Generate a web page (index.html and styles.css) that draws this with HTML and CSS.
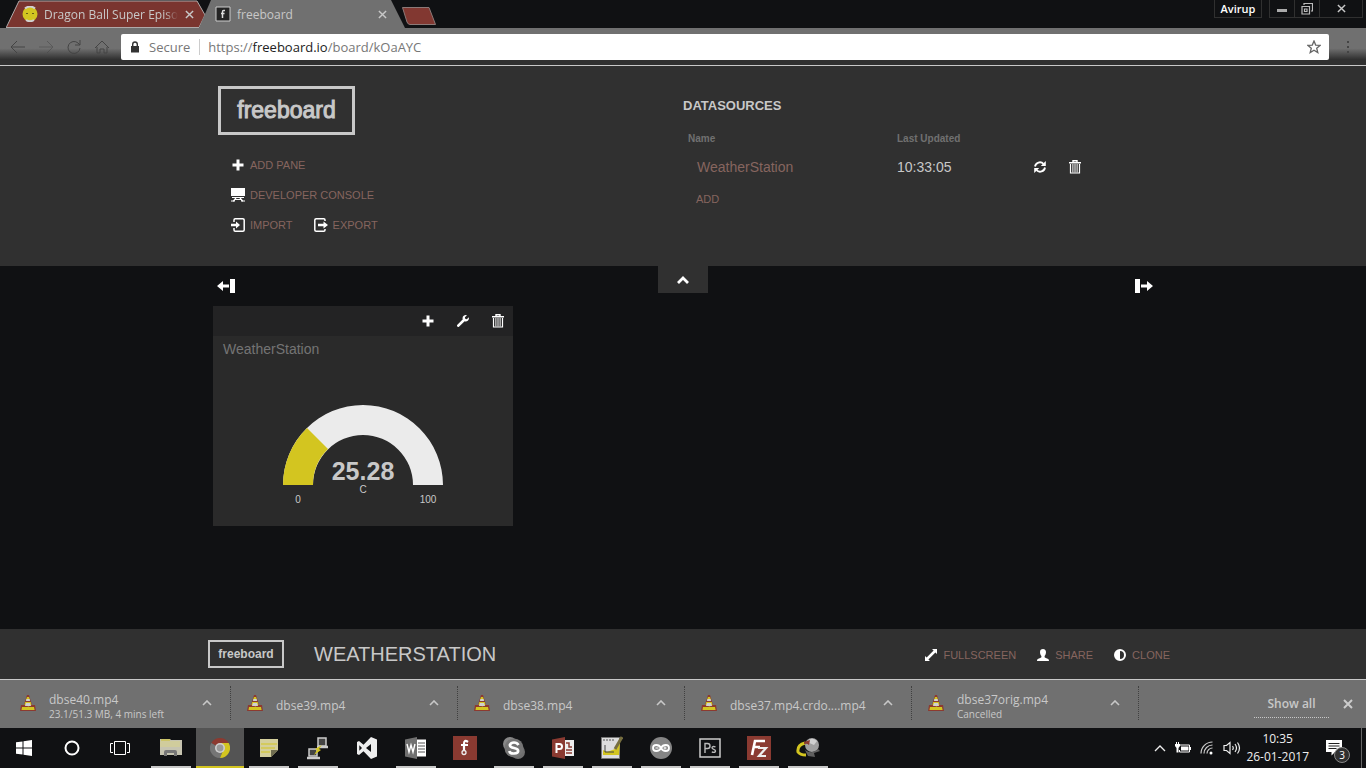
FILE: index.html
```
<!DOCTYPE html>
<html lang="en">
<head>
<meta charset="utf-8">
<title>freeboard</title>
<link rel="stylesheet" href="styles.css">
</head>
<body>
<svg width="0" height="0" class="defs" aria-hidden="true">
  <symbol id="trash" viewBox="0 0 12 14"><path d="M4 2V.7h4V2M0 2.7h12" fill="none" stroke="#fff" stroke-width="1.4"/><path d="M1.5 4v9h9V4" fill="none" stroke="#fff" stroke-width="1.2"/><path d="M3.9 4v8.500M6 4v8.500M8.100 4v8.500" stroke="#fff" stroke-width="1"/></symbol>
  <symbol id="plus" viewBox="0 0 12 12"><path d="M4.500 .5h3v4h4v3h-4v4h-3v-4h-4v-3h4z" fill="#fff"/></symbol>
  <symbol id="cone" viewBox="0 0 16 18"><path d="M7 1h2l3 10h3l1 6H0l1-6h3z" fill="#8c3a30"/><path d="M7 3h2l1 3H6zM5.200 8h5.600l.7 3-3 1.500L4.500 11zM2 13h12l.6 3H1.500z" fill="#d3c520"/><path d="M6.500 5h3l.6 2H5.900zM6 9h4l1 3H5z" fill="#d0d0d0"/></symbol>
  <symbol id="up" viewBox="0 0 10 6"><path d="M1 5l4-4 4 4" fill="none" stroke="#c8c8c8" stroke-width="1.600"/></symbol>
  <symbol id="close" viewBox="0 0 10 10"><path d="M1 1l8 8M9 1l-8 8" fill="none" stroke="currentColor" stroke-width="1.600"/></symbol>
</svg>

<div class="tabstrip">
  <div class="tab tab-red">
    <svg class="tab-shape" viewBox="0 0 200 28" preserveAspectRatio="none"><path d="M0 28L13 1H191L199 15L193 28z" fill="#7a352f"/><path d="M0 28L13 1H191L199 15L193 27.500H0" fill="none" stroke="#b0aaaa"/></svg>
    <svg class="fav" width="16" height="16" viewBox="0 0 16 16"><circle cx="8" cy="8" r="7.500" fill="#d3c520"/><path d="M3 2.500a7.500 7.500 0 0 1 10 0M4 14a7.500 7.500 0 0 0 8 0" stroke="#d0d0d0" stroke-width="2" fill="none"/><path d="M4 7.500h2M10 7.500h2" stroke="#665d16"/></svg>
    <span class="tab-title fade">Dragon Ball Super Episo</span>
    <button class="tab-close" aria-label="Close tab"><svg width="9" height="9"><use href="#close"/></svg></button>
  </div>
  <div class="tab tab-active">
    <svg class="tab-shape" viewBox="0 0 207 28" preserveAspectRatio="none"><path d="M0 28L12 0H192L206 28z" fill="#707070"/></svg>
    <svg class="fav" width="16" height="16" viewBox="0 0 16 16"><path d="M1 1h14v14H1z" fill="#242424" stroke="#ccc" stroke-width="1"/><path d="M10 4.500H8.500Q7.500 4.500 7.500 6v6M6 7.500h3.500" stroke="#ddd" stroke-width="1.500" fill="none"/></svg>
    <span class="tab-title">freeboard</span>
    <button class="tab-close" aria-label="Close tab"><svg width="9" height="9"><use href="#close"/></svg></button>
  </div>
  <button class="newtab" aria-label="New tab"><svg width="36" height="19" viewBox="0 0 36 19"><path d="M1.500 .5H28L34.500 17.500H9Q7 17.500 6 15z" fill="#823831" stroke="#8c7a78"/></svg></button>
  <div class="winctl">
    <button class="user">Avirup</button>
    <div class="wingroup">
      <button aria-label="Minimize"><svg width="10" height="10"><path d="M0 5h10v3H0z" fill="#aaa"/></svg></button>
      <button aria-label="Restore"><svg width="12" height="12" viewBox="0 0 12 12"><path d="M3 2V.5h8.500V8H10M1 3.500h7.500v7.500H1zM3.500 6h2.500v2.500H3.500z" fill="none" stroke="#bbb" stroke-width="1.200"/></svg></button>
      <button class="x" aria-label="Close"><svg width="9" height="9"><use href="#close"/></svg></button>
    </div>
  </div>
</div>

<div class="toolbar">
  <div class="nav">
    <button aria-label="Back"><svg width="16" height="14" viewBox="0 0 16 14"><path d="M7 1L1 7l6 6M1 7h14"/></svg></button>
    <button aria-label="Forward" class="dim"><svg width="16" height="14" viewBox="0 0 16 14"><path d="M9 1l6 6-6 6M15 7H1"/></svg></button>
    <button aria-label="Reload"><svg width="16" height="14" viewBox="0 0 16 14"><path d="M14 8a6 6 0 1 1-2-5l2 2M14 0v5H9"/></svg></button>
    <button aria-label="Home"><svg width="16" height="14" viewBox="0 0 16 14"><path d="M1 8l7-7 7 7M3 7v6h3V9h4v4h3V7"/></svg></button>
  </div>
  <div class="omnibox">
    <svg width="10" height="12" viewBox="0 0 10 12"><path d="M1 5h8v6.500H1z" fill="#333"/><path d="M2.700 5V3.300a2.300 2.300 0 0 1 4.600 0V5" fill="none" stroke="#333" stroke-width="1.400"/></svg>
    <span class="secure">Secure</span>
    <span class="url">https://<b>freeboard.io</b>/board/kOaAYC</span>
    <button class="star" aria-label="Bookmark"><svg width="14" height="14" viewBox="0 0 14 14"><path d="M7 1l1.700 4.100 4.300.3-3.300 2.800 1.100 4.300L7 10.200 3.200 12.500l1.100-4.300L1 5.400l4.300-.3z" fill="none" stroke="#666" stroke-width="1.300"/></svg></button>
  </div>
  <button class="dots" aria-label="Menu"><svg width="4" height="14" viewBox="0 0 4 14"><path d="M1 1h2v2H1zM1 6h2v2H1zM1 11h2v2H1z" fill="#444"/></svg></button>
</div>

<header class="admin">
  <div class="wrap admin-grid">
    <div class="admin-left">
      <h1 class="logo">freeboard</h1>
      <ul class="menu">
        <li><a href="#"><svg width="14" height="12"><use href="#plus"/></svg>ADD PANE</a></li>
        <li><a href="#"><svg width="14" height="14" viewBox="0 0 14 14"><path d="M0 0h14v8H0z" fill="#fff"/><path d="M1 9.500h12M5 10L2 13.500M9 10l3 3.500M4 11.500h6M0 13h4M10 13h4" stroke="#fff" stroke-width="1.200"/></svg>DEVELOPER CONSOLE</a></li>
        <li><a href="#"><svg width="14" height="14" viewBox="0 0 14 14"><path d="M3 4V2q0-1.200 1.200-1.200h7.600Q13.200.8 13.200 2v10q0 1.200-1.400 1.200H4.200Q3 13.200 3 12v-2" fill="none" stroke="#fff" stroke-width="1.500"/><path d="M0 5.800h5V3.500L9 7l-4 3.500V8.200H0z" fill="#fff"/></svg>IMPORT</a><a href="#"><svg width="14" height="14" viewBox="0 0 14 14"><path d="M11 3V2Q11 .8 9.800.8H2.200Q.8.800.8 2v10q0 1.200 1.400 1.200h7.600Q11 13.200 11 12v-1" fill="none" stroke="#fff" stroke-width="1.500"/><path d="M4 5.800h5.500V3.500L14 7l-4.500 3.500V8.200H4z" fill="#fff"/></svg>EXPORT</a></li>
      </ul>
    </div>
    <section class="sources">
      <h2>DATASOURCES</h2>
      <table>
        <thead><tr><th>Name</th><th>Last Updated</th><th></th></tr></thead>
        <tbody><tr><td><a href="#">WeatherStation</a></td><td>10:33:05</td><td class="acts">
          <button aria-label="Refresh"><svg width="12" height="12" viewBox="0 0 12 12"><path d="M1 5.500a5 5 0 0 1 8.500-2.700M11 6.500a5 5 0 0 1-8.500 2.700" fill="none" stroke="#fff" stroke-width="1.800"/><path d="M11.800 0v5H6.800zM.2 12V7h5z" fill="#fff"/></svg></button>
          <button aria-label="Delete datasource"><svg width="12" height="14"><use href="#trash"/></svg></button>
        </td></tr></tbody>
      </table>
      <a class="add" href="#">ADD</a>
    </section>
  </div>
</header>

<main class="board">
  <div class="wrap">
    <div class="colbar">
      <button aria-label="Add column left"><svg width="18" height="14" viewBox="0 0 18 14"><path d="M0 7l6-5v3.500h6v3H6V12zM13 0h5v14h-5z" fill="#fff"/></svg></button>
      <button class="toggle" aria-label="Collapse header"><svg width="12" height="8" viewBox="0 0 12 8"><path d="M1 7l5-5 5 5" fill="none" stroke="#fff" stroke-width="2.800"/></svg></button>
      <button class="right" aria-label="Add column right"><svg width="18" height="14" viewBox="0 0 18 14"><path d="M18 7l-6-5v3.500H6v3h6V12zM5 0H0v14h5z" fill="#fff"/></svg></button>
    </div>
    <article class="pane">
      <div class="pane-tools">
        <button aria-label="Add widget"><svg width="12" height="12"><use href="#plus"/></svg></button>
        <button aria-label="Edit pane"><svg width="12" height="12" viewBox="0 0 12 12"><path d="M1.300 10.700L7 5" stroke="#fff" stroke-width="2.600" stroke-linecap="round"/><path d="M10 .3A3.300 3.300 0 0 0 5.600 4l2.300 2.400A3.300 3.300 0 0 0 11.800 2.300L9.800 4.200 8.200 3.700 7.900 2.200z" fill="#fff"/></svg></button>
        <button aria-label="Delete pane"><svg width="12" height="14"><use href="#trash"/></svg></button>
      </div>
      <h2 class="pane-title">WeatherStation</h2>
      <svg class="gauge" width="200" height="120" viewBox="0 0 200 120" role="img">
        <path d="M20 85A80 80 0 0 1 180 85H150A50 50 0 0 0 50 85z" fill="#ebebeb"/>
        <path d="M20 85A80 80 0 0 1 44 28L65 49A50 50 0 0 0 50 85z" fill="#d3c520"/>
        <text class="g-value" x="100" y="80">25.28</text>
        <text class="g-small" x="100" y="93">C</text>
        <text class="g-small" x="35" y="103">0</text>
        <text class="g-small" x="165" y="103">100</text>
      </svg>
    </article>
  </div>
</main>

<footer class="boardbar">
  <div class="bar-wrap">
    <a class="logo logo-small" href="#">freeboard</a>
    <h2 class="board-name">WEATHERSTATION</h2>
    <nav class="bar-links">
      <a href="#"><svg width="12" height="12" viewBox="0 0 12 12"><path d="M7 0h5v5l-1.600-1.600-7 7L5 12H0V7l1.600 1.600 7-7z" fill="#fff"/></svg>FULLSCREEN</a>
      <a href="#"><svg width="12" height="12" viewBox="0 0 12 12"><path d="M6 0c2 0 3 1.300 3 3.200S8 6.500 7.600 7c0 1.600 0 1.600 1.800 2.200C11.500 10 12 10.300 12 12H0c0-1.700.5-2 2.600-2.800C4.400 8.600 4.400 8.600 4.400 7 4 6.500 3 5.200 3 3.200S4 0 6 0z" fill="#fff"/></svg>SHARE</a>
      <a href="#"><svg width="12" height="12" viewBox="0 0 12 12"><circle cx="6" cy="6" r="5" fill="none" stroke="#fff" stroke-width="2"/><path d="M6 1a5 5 0 0 0 0 10z" fill="#fff"/></svg>CLONE</a>
    </nav>
  </div>
</footer>

<div class="downloads">
  <div class="dl"><svg width="16" height="18"><use href="#cone"/></svg><div class="dl-text">dbse40.mp4<small>23.1/51.3 MB, 4 mins left</small></div><button aria-label="Options"><svg width="10" height="6"><use href="#up"/></svg></button></div>
  <div class="dl"><svg width="16" height="18"><use href="#cone"/></svg><div class="dl-text">dbse39.mp4</div><button aria-label="Options"><svg width="10" height="6"><use href="#up"/></svg></button></div>
  <div class="dl"><svg width="16" height="18"><use href="#cone"/></svg><div class="dl-text">dbse38.mp4</div><button aria-label="Options"><svg width="10" height="6"><use href="#up"/></svg></button></div>
  <div class="dl"><svg width="16" height="18"><use href="#cone"/></svg><div class="dl-text">dbse37.mp4.crdo....mp4</div><button aria-label="Options"><svg width="10" height="6"><use href="#up"/></svg></button></div>
  <div class="dl"><svg width="16" height="18"><use href="#cone"/></svg><div class="dl-text">dbse37orig.mp4<small>Cancelled</small></div><button aria-label="Options"><svg width="10" height="6"><use href="#up"/></svg></button></div>
  <div class="dl-end"><button class="showall">Show all</button><button class="dl-close" aria-label="Close downloads"><svg width="10" height="10" viewBox="0 0 10 10"><path d="M1 1l8 8M9 1l-8 8" stroke="#ccc" stroke-width="2"/></svg></button></div>
</div>

<div class="taskbar">
  <div class="sys">
    <button aria-label="Start"><svg width="16" height="16" viewBox="0 0 16 16"><path d="M0 2.300L6.500 1.400V7.500H0zM7.500 1.200L16 0v7.500H7.500zM0 8.500h6.500v6.100L0 13.700zM7.500 8.500H16V16l-8.500-1.200z" fill="#fff"/></svg></button>
    <button aria-label="Cortana"><svg width="16" height="16"><circle cx="8" cy="8" r="6.500" fill="none" stroke="#fff" stroke-width="2"/></svg></button>
    <button aria-label="Task view"><svg width="20" height="16" viewBox="0 0 20 16"><path d="M4.500 1.500h11v13h-11zM3 3.500H.5v9H3M17 3.500h2.500v9H17" fill="none" stroke="#fff"/></svg></button>
  </div>
  <div class="apps">
    <button class="open" aria-label="File Explorer"><svg width="22" height="20" viewBox="0 0 22 20"><path d="M0 1h10l1 1h11v15H0z" fill="#c6c4b0"/><path d="M0 3h20v6H0z" fill="#d0cc9c"/><path d="M4 18v-4q0-2 2-2h9q2 0 2 2v4h-3v-3H7v3z" fill="#777" /><path d="M1 2h9" stroke="#d3c520"/></svg></button>
    <button class="open active" aria-label="Chrome"><svg width="20" height="24" viewBox="0 0 20 24"><path d="M10 12L1.300 7A10 10 0 0 1 18.700 7z" fill="#8c3a30"/><path d="M1.300 7A10 10 0 0 0 10 22L13 14z" fill="#757575"/><path d="M18.700 7A10 10 0 0 1 10 22L14 12 10 7z" fill="#d3c520"/><circle cx="10" cy="12" r="5" fill="#d0d0d0"/><circle cx="10" cy="12" r="3.400" fill="#999"/></svg></button>
    <button class="open" aria-label="Sticky Notes"><svg width="18" height="18" viewBox="0 0 18 18"><path d="M0 0h18v11l-7 7H0z" fill="#d4cf9c"/><path d="M1 5h16M1 9h14M1 13h9" stroke="#d3c520"/><path d="M11 18v-7h7z" fill="#706d50"/></svg></button>
    <button class="open" aria-label="PuTTY"><svg width="24" height="24" viewBox="0 0 24 24"><path d="M12 2h8v8h-8zM3 13h8v7H3z" fill="#444" stroke="#ccc" stroke-width="1.500"/><path d="M11 11h11M1 22h13" stroke="#ccc" stroke-width="2.500"/><path d="M16 9l-3 4 2 1-7 5 3-5-2-1z" fill="#d3c520"/></svg></button>
    <button aria-label="Visual Studio"><svg width="22" height="22" viewBox="0 0 22 22"><path d="M15 0l6 2.500v17L15 22 7.500 14.300 3 18l-2-1V5l2-1 4.500 3.700zM15 7l-5 4 5 4zM3.300 8.300v5.400L6 11z" fill="#eee" fill-rule="evenodd"/></svg></button>
    <button class="open" aria-label="Word"><svg width="22" height="22" viewBox="0 0 22 22"><path d="M11 2.500h10v17H11z" fill="#fff"/><path d="M13 6h7M13 9h7M13 12h7M13 15h7" stroke="#555"/><path d="M0 2.500L12 0v22L0 19.500z" fill="#707070"/><path d="M2 7l2 8 2-7 2 7 2-8" fill="none" stroke="#fff" stroke-width="1.400"/></svg></button>
    <button aria-label="Fritzing"><svg width="24" height="24" viewBox="0 0 24 24"><path d="M0 0h24v24H0z" fill="#8a3a31"/><path d="M15 6q-4-3-4 2v6M8 9h7" stroke="#fff" stroke-width="2.200" fill="none"/><circle cx="11" cy="16.500" r="2" stroke="#eee" stroke-width="1.300" fill="none"/></svg></button>
    <button class="open" aria-label="Skype"><svg width="22" height="22" viewBox="0 0 22 22"><circle cx="7" cy="7" r="7" fill="#888"/><circle cx="15" cy="15" r="7" fill="#707070"/><circle cx="11" cy="11" r="9.500" fill="#757575"/><path d="M15.500 8Q14 5.500 11 5.500T6.800 8q0 2.200 4.200 3t4.200 3-4.200 2.500T6.300 14" fill="none" stroke="#fff" stroke-width="2.600"/></svg></button>
    <button class="open" aria-label="PowerPoint"><svg width="22" height="22" viewBox="0 0 22 22"><path d="M12 3h10v16H12z" fill="#eee"/><path d="M14 6h3v4h3M14 13h6M14 16h6" stroke="#8a3a31" fill="none" stroke-width="1.500"/><path d="M0 2.500L13 0v22L0 19.500z" fill="#8a3a31"/><path d="M4.500 16V7h3q2.500 0 2.500 2.500T7.500 12H5" fill="none" stroke="#fff" stroke-width="2"/></svg></button>
    <button class="open" aria-label="Notepad++"><svg width="22" height="24" viewBox="0 0 22 24"><path d="M.5 1.500h18v21H.5z" fill="#ddd" stroke="#777"/><path d="M2 4h12" stroke="#555" stroke-dasharray="2 1"/><path d="M2 14l4 2 8-3 5-6-1 12H2z" fill="#d3c520"/><path d="M4 9v7h9" stroke="#444" fill="none"/><path d="M14 13l7-12" stroke="#776f40" stroke-width="3"/></svg></button>
    <button class="open" aria-label="Arduino"><svg width="22" height="22" viewBox="0 0 22 22"><circle cx="11" cy="11" r="11" fill="#858585"/><path d="M11 11C9 7 3 7 3 11s6 4 8 0 8-4 8 0-6 4-8 0z" fill="none" stroke="#fff" stroke-width="1.800"/><path d="M5.500 11h3M13.500 11h3M15 9.500v3" stroke="#fff"/></svg></button>
    <button class="open" aria-label="Photoshop"><svg width="22" height="20" viewBox="0 0 22 20"><path d="M1 1h20v18H1z" fill="#101113" stroke="#ccc" stroke-width="1.500"/><path d="M6 15V5.500h2.500Q11 5.500 11 8t-2.500 2.500H6M16.500 8.800q-3.500-1-3.500 1 0 1 1.800 1.500t1.700 1.700q0 2-3.700 1" fill="none" stroke="#bbb" stroke-width="1.400"/></svg></button>
    <button class="open" aria-label="FileZilla"><svg width="24" height="24" viewBox="0 0 24 24"><path d="M0 0h24v24H0z" fill="#8a3a31"/><path d="M5 19L8 5h10M6.500 11H13" fill="none" stroke="#fff" stroke-width="2.600"/><path d="M11 12h8l-7 8h7" fill="none" stroke="#eee" stroke-width="2.200"/></svg></button>
    <button class="open" aria-label="Download Manager"><svg width="24" height="22" viewBox="0 0 24 22"><circle cx="16" cy="8" r="7" fill="#a0a0a0"/><path d="M11 5q4-6 10-1l-3 4z" fill="#d0d0d0"/><path d="M9 13q7 5 13-1l2 2-6 2 1 4-7-1z" fill="#606060"/><path d="M9 6Q1 8 2 15q2 3 8 3" fill="none" stroke="#d3c520" stroke-width="3"/><path d="M8 5l6-2-1 5q-2-2-5-1z" fill="#8c3a30"/></svg></button>
  </div>
  <div class="tray">
    <button aria-label="Hidden icons"><svg width="12" height="8" viewBox="0 0 12 8"><path d="M1 7l5-5 5 5" fill="none" stroke="#eee" stroke-width="1.300"/></svg></button>
    <button aria-label="Battery"><svg width="16" height="14" viewBox="0 0 16 14"><path d="M5 4h9.500v7H4.500V9" fill="none" stroke="#fff"/><path d="M6 5.500h7.500v4H6zM15 6h1v3h-1zM0 3h5v2L3.500 7v4.500h-2V7L0 5zM1 1h1v2H1zM3 1h1v2H3z" fill="#fff"/></svg></button>
    <button aria-label="Wi-Fi"><svg width="14" height="14" viewBox="0 0 14 14"><path d="M1 12.500A11.500 11.500 0 0 1 12.500 1M4 12.500A8.500 8.500 0 0 1 12.500 4M7 12.500A5.500 5.500 0 0 1 12.500 7" fill="none" stroke="#ccc" stroke-width="1.200"/><circle cx="11" cy="12" r="1.500" fill="#fff"/></svg></button>
    <button aria-label="Volume"><svg width="18" height="14" viewBox="0 0 18 14"><path d="M1 4.500h2.500L7 1.500v11L3.500 9.500H1zM9.500 5q1.500 2 0 4M12 3q3 4 0 8M14.500 1.500q4 5.500 0 11" fill="none" stroke="#eee" stroke-width="1.200"/></svg></button>
    <div class="clock"><span>10:35</span><span>26-01-2017</span></div>
    <button class="notes" aria-label="Notifications"><svg width="16" height="16" viewBox="0 0 16 16"><path d="M0 0h16v12H9l-3.500 3.500V12H0z" fill="#fff"/><path d="M2.500 3.500h11M2.500 6h11M2.500 8.500h8" stroke="#222"/></svg><span class="badge">3</span></button>
  </div>
</div>
</body>
</html>
```
FILE: styles.css
```
* { box-sizing: border-box; }
body {
  margin: 0;
  min-height: 100vh;
  display: flex;
  flex-direction: column;
  background: #101113;
  color: #c8c8c8;
  font-family: "Liberation Sans", Arial, sans-serif;
  font-size: 14px;
}
button { background: none; border: 0; padding: 0; margin: 0; color: inherit; font: inherit; display: flex; align-items: center; justify-content: center; }
a { color: #86655f; text-decoration: none; }
svg { display: block; flex: none; }
h1, h2, ul { margin: 0; padding: 0; list-style: none; }
.defs { position: absolute; }
.wrap { width: 100%; max-width: 940px; margin: 0 auto; }

/* browser tabs */
.tabstrip { display: flex; height: 28px; padding-left: 6px; color: #c8c8c8; font: 12px "Open Sans", sans-serif; }
.tab { position: relative; display: flex; align-items: center; height: 28px; padding-left: 16px; }
.tab > * { position: relative; }
.tab .tab-shape { position: absolute; inset: 0; width: 100%; height: 100%; }
.tab-red { width: 200px; }
.tab-active { width: 207px; margin-left: -7px; }
.fav { margin-right: 6px; }
.tab-title { width: 134px; white-space: nowrap; }
.fade { mask-image: linear-gradient(to right, #000 90%, transparent); }
.tab-close { width: 22px; height: 20px; }
.newtab { align-self: flex-start; padding-top: 7px; margin-left: -5px; }
.winctl { margin-left: auto; display: flex; gap: 7px; height: 18px; padding-right: 3px; }
.user { width: 48px; border: 1px solid #303030; border-top: 0; font-size: 11px; font-weight: 600; color: #fff; }
.wingroup { display: flex; border: 1px solid #303030; border-top: 0; }
.wingroup button { width: 25px; border-right: 1px solid #303030; }
.wingroup .x { width: 42px; border: 0; }

/* address bar */
.toolbar { display: flex; align-items: center; height: 38px; padding-left: 8px; background: linear-gradient(#707070 55%, #303030 85%); border-bottom: 1px solid #c8c8c8; font: 13px "Open Sans", sans-serif; }
.nav { display: flex; gap: 12px; width: 113px; padding-left: 2px; fill: none; stroke: #444; stroke-width: 1; }
.dim { opacity: .5; }
.omnibox { flex: 1; display: flex; align-items: center; height: 26px; padding: 0 8px 0 9px; background: #fff; border-radius: 2px; color: #777; }
.secure { margin-left: 9px; padding-right: 9px; border-right: 1px solid #ccc; line-height: 16px; }
.url { margin-left: 8px; }
.url b { font-weight: 400; color: #222; }
.star { margin-left: auto; }
.dots { width: 37px; }

/* admin header */
.admin { background: #303030; min-height: 200px; }
.admin-grid { display: grid; grid-template-columns: 1fr 1fr; padding-top: 20px; }
.admin-left { padding-left: 5px; }
.logo { display: inline-flex; align-items: center; justify-content: center; width: 137px; height: 49px; border: 3px solid #c8c8c8; color: #c8c8c8; font-size: 23px; font-weight: 400; -webkit-text-stroke: 1px #c8c8c8; }
.menu { padding: 15px 0 0 13px; font-size: 11px; }
.menu li { display: flex; gap: 21px; height: 30px; }
.menu a { display: flex; align-items: center; gap: 5px; }
.sources { padding-top: 12px; }
.sources h2 { font-size: 13px; line-height: 16px; }
table { width: 100%; border-collapse: collapse; margin-top: 16px; table-layout: fixed; }
th { height: 16px; padding: 0 5px; text-align: left; font-size: 10px; color: #707070; }
th:nth-child(1) { width: 209px; }
th:nth-child(2) { width: 132px; }
td { height: 42px; padding: 0 5px; }
td:first-child { padding-left: 14px; }
.acts button { float: left; width: 12px; height: 14px; margin: 0 12px 0 11px; }
.acts button:first-child { margin-left: 5px; }
.add { margin-left: 13px; font-size: 11px; line-height: 22px; display: inline-block; }

/* board */
.board { flex: 1; }
.colbar { display: grid; grid-template-columns: 1fr 50px 1fr; height: 40px; }
.colbar button { height: 40px; justify-content: flex-start; padding-left: 4px; }
.colbar .right { justify-content: flex-end; padding-left: 0; }
.colbar .toggle { justify-content: center; padding: 0; height: 27px; background: #303030; }
.pane { width: 300px; height: 220px; background: #2a2a2a; }
.pane-tools { display: flex; justify-content: flex-end; gap: 23px; height: 30px; padding-right: 9px; background: #232324; }
.pane-title { padding: 4px 10px; color: #747474; font-size: 14px; font-weight: 400; line-height: 18px; }
.gauge { margin: 38px auto 0; fill: #c8c8c8; text-anchor: middle; }
.g-value { font-size: 25px; font-weight: 700; }
.g-small { font-size: 10px; }

/* board bar */
.boardbar { height: 51px; background: #303030; border-bottom: 1px solid #c8c8c8; }
.bar-wrap { display: flex; align-items: center; max-width: 974px; height: 50px; margin: 0 auto; padding-left: 12px; }
.logo-small { width: 76px; height: 28px; border-width: 2px; font-size: 12px; font-weight: 700; -webkit-text-stroke: 0; }
.board-name { margin-left: 30px; font-size: 20px; font-weight: 400; }
.bar-links { display: flex; gap: 21px; margin-left: auto; padding-top: 2px; font-size: 11px; }
.bar-links a { display: flex; align-items: center; gap: 6px; }

/* downloads */
.downloads { display: flex; height: 48px; background: #707070; font: 12px "Open Sans", sans-serif; }
.dl { display: flex; align-items: center; width: 227px; margin: 6px 0 8px; padding: 0 18px 0 16px; border-right: 1px dotted #404040; }
.dl:first-child { width: 231px; padding-left: 20px; }
.dl-text { flex: 1; margin-left: 13px; padding-top: 6px; line-height: 16px; white-space: nowrap; }
.dl small { display: block; font-size: 10px; line-height: 12px; }
.dl-end { flex: 1; display: flex; align-items: center; justify-content: flex-end; gap: 14px; padding-right: 13px; }
.showall { width: 75px; height: 28px; border-bottom: 1px dotted #c8c8c8; font-size: 12px; font-weight: 600; }

/* taskbar */
.taskbar { display: flex; height: 40px; color: #eee; font: 12px "Open Sans", sans-serif; }
.sys, .apps, .tray { display: flex; }
.sys button { width: 48px; }
.apps { margin-left: 3px; gap: 1px; }
.apps button { width: 48px; height: 40px; }
.apps .open { background: linear-gradient(#c8c8c8, #c8c8c8) center bottom / 40px 2px no-repeat; }
.apps .active { background: linear-gradient(#d3c520, #d3c520) center bottom / 48px 2px no-repeat #545454; }
.tray { margin-left: auto; gap: 9px; padding-right: 4px; }
.clock { display: flex; flex-direction: column; align-items: center; justify-content: center; margin-left: -4px; line-height: 18px; }
.notes { position: relative; width: 44px; border-right: 1px solid #666; padding-right: 12px; }
.badge { position: absolute; left: 16px; top: 19px; width: 16px; height: 16px; border: 1px solid #888; border-radius: 50%; background: #303030; color: #fff; font-size: 10px; line-height: 14px; }
```
